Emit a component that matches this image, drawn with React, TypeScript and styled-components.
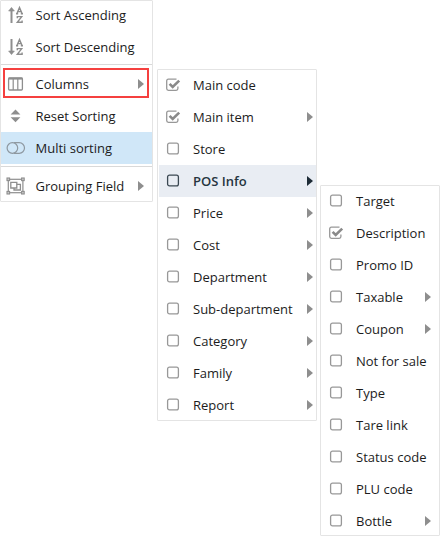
import React from 'react';
import styled, { createGlobalStyle, css } from 'styled-components';

const GlobalStyle = createGlobalStyle`
  body {
    margin: 0;
    background: #fff;
    font-family: 'Open Sans', 'Noto Sans', sans-serif;
    overflow: hidden;
  }
`;

const Cascade = styled.div`
  display: flex;
  align-items: flex-start;
  width: 440px;
  height: 536px;
`;

const Menu = styled.ul<{ $width: number; $height: number; $top?: number; $gap?: number }>`
  box-sizing: border-box;
  flex: none;
  list-style: none;
  width: ${(p) => p.$width}px;
  height: ${(p) => p.$height}px;
  margin: ${(p) => p.$top ?? 0}px 0 0 ${(p) => p.$gap ?? 0}px;
  padding: 0;
  background: #fff;
  border: 1px solid #e4e4e4;
  border-radius: 1px;
`;

const Row = styled.li<{ $state?: 'active' | 'open'; $first?: boolean }>`
  position: relative;
  box-sizing: border-box;
  display: flex;
  align-items: center;
  height: ${(p) => (p.$first ? 30 : 32)}px;
  padding-bottom: ${(p) => (p.$first ? 2 : 0)}px;
  color: #1c1c1c;
  ${(p) => p.$state === 'active' && css`background: #d0e7f8;`}
  ${(p) =>
    p.$state === 'open' &&
    css`
      background: #e9edf3;
      color: #263540;
      font-weight: 600;
      margin-left: 1px;
    `}
`;

const SubRow = styled(Row)<{ $lead: number }>`
  height: 32px;
  padding-left: ${(p) => p.$lead - (p.$state === 'open' ? 1 : 0)}px;
  &:first-child {
    height: 31px;
    padding-bottom: 1px;
  }
`;

const IconSlot = styled.span<{ $width: number }>`
  display: flex;
  flex: none;
  width: ${(p) => p.$width}px;

  svg {
    display: block;
    overflow: visible;
  }
`;

const Label = styled.span`
  flex: 1;
  font-size: 13px;
  line-height: 18px;
  white-space: nowrap;
`;

const Caret = styled.span<{ $dark?: boolean; $right: number }>`
  width: 0;
  height: 0;
  margin-right: ${(p) => p.$right}px;
  border-left: 6px solid ${(p) => (p.$dark ? '#1d2b36' : '#8e8e8e')};
  border-top: 5px solid transparent;
  border-bottom: 5px solid transparent;
`;

const Divider = styled.li<{ $before: number; $after: number }>`
  height: 1px;
  margin: ${(p) => p.$before}px 0 ${(p) => p.$after}px;
  background: #d9d9d9;
`;

const Outline = styled.span`
  position: absolute;
  left: 2px;
  top: 0;
  width: 146px;
  height: 30px;
  box-sizing: border-box;
  border: 2px solid #f5403f;
  pointer-events: none;
`;

const SortIcon = ({ down }: { down?: boolean }) => (
  <svg width="32" height="18" viewBox="0 0 32 18" fill="none" stroke="#8e8e8e">
    <g transform={down ? 'matrix(1 0 0 -1 0 18)' : undefined}>
      <path d="M10.5 3v14" strokeWidth="2" />
      <path d="M7.6 5 10.5 1.4 13.4 5Z" fill="#8e8e8e" strokeWidth=".6" />
    </g>
    <path d="M15.9 7.6 18.5 1.6 21.1 7.6M17 5.6h3M15 7.7h2.2M19.8 7.7H22" strokeWidth="1.4" />
    <path d="M16.3 12.2v-1.6h4.4l-4.4 5.7h4.8v-1.7" strokeWidth="1.4" />
  </svg>
);

const ColumnsIcon = () => (
  <svg width="32" height="16" viewBox="0 0 32 16" fill="none" stroke="#8e8e8e">
    <rect x="7.6" y="2" width="13.8" height="12" rx="1" strokeWidth="1.3" />
    <path d="M7.5 2.6h14" strokeWidth="2" />
    <path d="M12.2 3v11M16.8 3v11" strokeWidth="1.2" />
  </svg>
);

const ResetIcon = () => (
  <svg width="32" height="16" viewBox="0 0 32 16" fill="#8e8e8e">
    <path d="M9.6 6.6 14.5 1.6l4.9 5ZM9.6 9.2h9.8l-4.9 5Z" />
  </svg>
);

const MultiIcon = () => (
  <svg width="32" height="16" viewBox="0 0 32 16" fill="none" stroke="#8e98a0" strokeWidth="1.2">
    <circle cx="11.4" cy="8" r="5.3" />
    <path d="M12.8 2.7h5.4a5.3 5.3 0 0 1 0 10.6h-5.4" />
  </svg>
);

const GroupIcon = () => (
  <svg width="32" height="18" viewBox="0 0 32 18" fill="none" stroke="#8e8e8e">
    <rect x="7.3" y="2.3" width="14.6" height="13.4" strokeWidth="1.2" />
    <path d="M9.8 5.4h6v5.6h-6z" strokeWidth="1.3" />
    <path d="M13 11v2h6.4V7.4h-3.6" strokeWidth="1.3" />
    <g fill="#c9c9c9" strokeWidth="1.1">
      <rect x="6" y="1" width="2.6" height="2.6" />
      <rect x="20.6" y="1" width="2.6" height="2.6" />
      <rect x="6" y="14.4" width="2.6" height="2.6" />
      <rect x="20.6" y="14.4" width="2.6" height="2.6" />
    </g>
  </svg>
);

const Box = ({ checked, dark }: { checked?: boolean; dark?: boolean }) => (
  <svg width="15" height="14" viewBox="0 0 15 14" fill="none" stroke={dark ? '#3b4852' : '#989898'}>
    {checked ? (
      <>
        <path d="M10.5 1.2H2.4Q.7 1.2.7 2.9v7.7q0 1.7 1.7 1.7h7.8q1.7 0 1.7-1.7V8.6" strokeWidth="1.3" />
        <path d="M3.6 5.8 6.7 9 13.2 2.6" stroke="#8a8a8a" strokeWidth="2.6" />
      </>
    ) : (
      <rect x="1.6" y="1.1" width="10.8" height="10.8" rx="1.9" strokeWidth="1.3" />
    )}
  </svg>
);

type Item = { label: string; checked?: boolean; more?: boolean; open?: boolean };

const columnItems: Item[] = [
  { label: 'Main code', checked: true },
  { label: 'Main item', checked: true, more: true },
  { label: 'Store' },
  { label: 'POS Info', more: true, open: true },
  { label: 'Price', more: true },
  { label: 'Cost', more: true },
  { label: 'Department', more: true },
  { label: 'Sub-department', more: true },
  { label: 'Category', more: true },
  { label: 'Family', more: true },
  { label: 'Report', more: true },
];

const posItems: Item[] = [
  { label: 'Target' },
  { label: 'Description', checked: true },
  { label: 'Promo ID' },
  { label: 'Taxable', more: true },
  { label: 'Coupon', more: true },
  { label: 'Not for sale' },
  { label: 'Type' },
  { label: 'Tare link' },
  { label: 'Status code' },
  { label: 'PLU code' },
  { label: 'Bottle', more: true },
];

const CheckRows = ({ items, lead, right }: { items: Item[]; lead: number; right: number }) => (
  <>
    {items.map((item) => (
      <SubRow key={item.label} $lead={lead} $state={item.open ? 'open' : undefined}>
        <IconSlot $width={27}>
          <Box checked={item.checked} dark={item.open} />
        </IconSlot>
        <Label>{item.label}</Label>
        {item.more && <Caret $dark={item.open} $right={right} />}
      </SubRow>
    ))}
  </>
);

const App = () => (
  <>
    <GlobalStyle />
    <Cascade>
      <Menu $width={153} $height={202}>
        <Row $first>
          <IconSlot $width={34.5}><SortIcon /></IconSlot>
          <Label>Sort Ascending</Label>
        </Row>
        <Row>
          <IconSlot $width={34.5}><SortIcon down /></IconSlot>
          <Label>Sort Descending</Label>
        </Row>
        <Divider $before={1} $after={3} />
        <Row>
          <IconSlot $width={34.5}><ColumnsIcon /></IconSlot>
          <Label>Columns</Label>
          <Caret $right={8} />
          <Outline />
        </Row>
        <Row>
          <IconSlot $width={34.5}><ResetIcon /></IconSlot>
          <Label>Reset Sorting</Label>
        </Row>
        <Row $state="active">
          <IconSlot $width={34.5}><MultiIcon /></IconSlot>
          <Label>Multi sorting</Label>
        </Row>
        <Divider $before={2} $after={3} />
        <Row>
          <IconSlot $width={34.5}><GroupIcon /></IconSlot>
          <Label>Grouping Field</Label>
          <Caret $right={8} />
        </Row>
      </Menu>
      <Menu $width={160} $height={352} $top={69} $gap={4}>
        <CheckRows items={columnItems} lead={8} right={3} />
      </Menu>
      <Menu $width={120} $height={351} $top={185} $gap={3}>
        <CheckRows items={posItems} lead={8} right={8} />
      </Menu>
    </Cascade>
  </>
);

export default App;
